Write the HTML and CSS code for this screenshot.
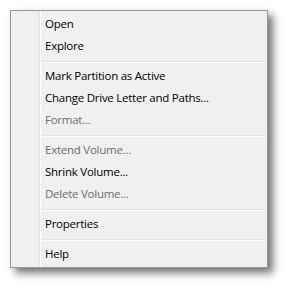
FILE: index.html
```html
<!DOCTYPE html>
<html>
<head>
<meta charset="utf-8">
<link rel="stylesheet" href="styles.css">
</head>
<body>
<div class="menu">
  <div class="item">Open</div>
  <div class="item">Explore</div>
  <div class="sep"></div>
  <div class="item">Mark Partition as Active</div>
  <div class="item">Change Drive Letter and Paths...</div>
  <div class="item disabled">Format...</div>
  <div class="sep"></div>
  <div class="item disabled">Extend Volume...</div>
  <div class="item">Shrink Volume...</div>
  <div class="item disabled">Delete Volume...</div>
  <div class="sep"></div>
  <div class="item">Properties</div>
  <div class="sep"></div>
  <div class="item">Help</div>
</div>
</body>
</html>
```

FILE: styles.css
```css
html, body {
  margin: 0;
  padding: 0;
  background: #ffffff;
}
body {
  padding: 10px 0 0 10px;
  width: 286px;
  height: 286px;
  box-sizing: border-box;
  overflow: hidden;
}
.menu {
  box-sizing: border-box;
  width: 258px;
  height: 258px;
  border: 1px solid #979797;
  padding: 2px 1px 2px 2px;
  display: flex;
  flex-direction: column;
  background:
    linear-gradient(to right, transparent 28px, #e2e3e3 28px, #e2e3e3 29px, #ffffff 29px, #ffffff 30px, transparent 30px),
    #f0f0f0;
  box-shadow: 5px 5px 8px rgba(0, 0, 0, 0.55);
  font-family: "Open Sans", "Noto Sans", sans-serif;
  font-size: 11.5px;
  letter-spacing: -0.25px;
  color: #000000;
}
.item {
  height: 22px;
  line-height: 22px;
  padding-left: 32px;
  white-space: nowrap;
}
.item.disabled {
  color: #6d6d6d;
}
.sep {
  height: 8px;
  margin-left: 29px;
  box-sizing: border-box;
  padding-top: 4px;
}
.sep::before {
  content: "";
  display: block;
  height: 1px;
  background: #e2e3e3;
  border-bottom: 1px solid #ffffff;
}
```
